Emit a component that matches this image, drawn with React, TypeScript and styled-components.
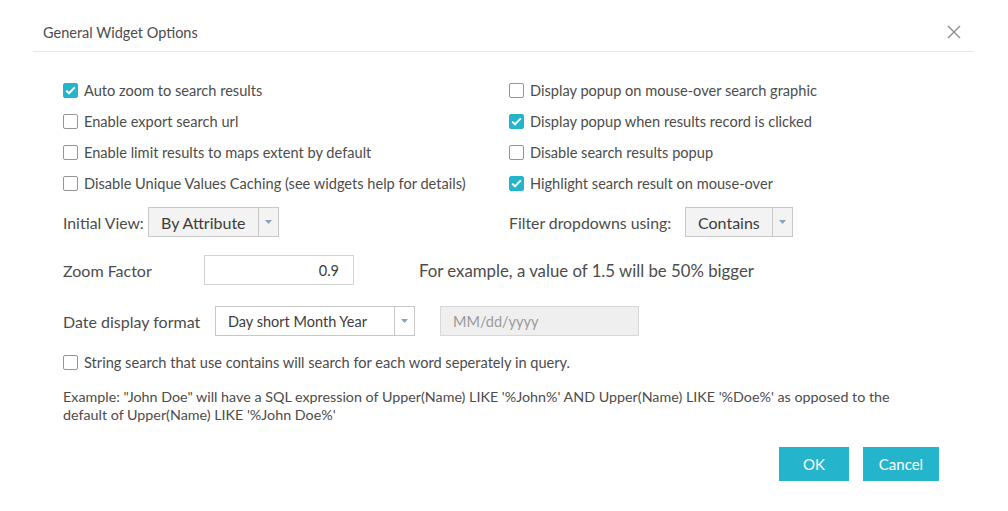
import React from "react";
import styled, { createGlobalStyle } from "styled-components";

const Global = createGlobalStyle`
  html, body { margin: 0; padding: 0; background: #fff; }
  body { font-family: Lato, "Open Sans", sans-serif; color: #4c4c4c; }
  * { box-sizing: border-box; }
`;

const Dialog = styled.div`
  margin: 13px 22px 0 20px;
  height: 498px;
  border-radius: 6px;
  box-shadow: 0 0 2px rgba(0,0,0,0.04);
  display: flex;
  flex-direction: column;
`;

const Header = styled.div`
  margin: 0 13px;
  height: 39px;
  border-bottom: 1px solid #e1e8f0;
  display: flex;
  align-items: center;
  justify-content: space-between;
  padding: 0 12px 0 10px;
`;

const Title = styled.div`
  font-size: 14.5px;
  color: #4c4c4c;
`;

const Close = styled.button`
  border: 0;
  background: none;
  padding: 0;
  width: 14px;
  height: 14px;
  display: flex;
  cursor: pointer;
`;

const Body = styled.div`
  padding: 23px 43px 0 43px;
  display: flex;
  flex-direction: column;
`;

const Grid = styled.div`
  display: grid;
  grid-template-columns: 446px 1fr;
`;

const CheckRow = styled.label`
  display: flex;
  align-items: center;
  height: 31px;
  font-size: 14.6px;
  gap: 6px;
  white-space: nowrap;
`;

const Box = styled.span<{ $on?: boolean }>`
  width: 15px;
  height: 15px;
  border-radius: 2px;
  flex: none;
  display: inline-flex;
  align-items: center;
  justify-content: center;
  background: ${(p) => (p.$on ? "#24b5cc" : "#fff")};
  border: 1px solid ${(p) => (p.$on ? "#24b5cc" : "#959595")};
`;

const Inline = styled.div`
  display: flex;
  align-items: center;
  font-size: 15.8px;
  height: 46px;
`;

const Select = styled.div<{ $w: number }>`
  width: ${(p) => p.$w}px;
  height: 30px;
  border: 1px solid #c8c8c8;
  background: #f3f3f3;
  display: flex;
  font-size: 16px;
  color: #3c3c3c;
`;

const SelectText = styled.div`
  flex: 1;
  display: flex;
  align-items: center;
  padding-left: 12px;
`;

const Arrow = styled.div<{ $white?: boolean }>`
  width: 20px;
  border-left: 1px solid #c8c8c8;
  display: flex;
  align-items: center;
  justify-content: center;
  background: ${(p) => (p.$white ? "#fff" : "#f3f3f3")};
`;

const WhiteSelect = styled(Select)`
  background: #fff;
  font-size: 14.5px;
`;

const FieldRow = styled.div<{ $h: number }>`
  display: flex;
  align-items: center;
  height: ${(p) => p.$h}px;
  font-size: 16px;
`;

const Label = styled.div<{ $w: number }>`
  width: ${(p) => p.$w}px;
  flex: none;
  white-space: nowrap;
`;

const NumInput = styled.div`
  width: 150px;
  height: 30px;
  border: 1px solid #d3d3d3;
  display: flex;
  align-items: center;
  justify-content: flex-end;
  padding-right: 14px;
  font-size: 14.5px;
  color: #3c3c3c;
`;

const Hint = styled.div`
  margin-left: 65px;
  font-size: 16.8px;
`;

const Disabled = styled.div`
  margin-left: 25px;
  width: 199px;
  height: 30px;
  border: 1px solid #d8d8d8;
  background: #efefef;
  color: #9a9a9a;
  display: flex;
  align-items: center;
  padding-left: 12px;
  font-size: 14.5px;
`;

const Example = styled.div`
  margin-top: 10px;
  font-size: 14.3px;
  line-height: 18px;
  width: 870px;
`;

const Footer = styled.div`
  display: flex;
  justify-content: flex-end;
  gap: 14px;
  padding: 0 47px 0 0;
  margin-top: 23px;
`;

const Btn = styled.button<{ $w: number }>`
  width: ${(p) => p.$w}px;
  height: 34px;
  border: 0;
  background: #24b5cc;
  color: #fff;
  font-family: inherit;
  font-size: 15px;
  cursor: pointer;
`;

const Check = () => (
  <svg width="11" height="9" viewBox="0 0 11 9">
    <path d="M1.2 4.6 L4 7.3 L9.8 1.4" stroke="#fff" strokeWidth="2" fill="none" />
  </svg>
);

const Opt = ({ on, children }: { on?: boolean; children: React.ReactNode }) => (
  <CheckRow>
    <Box $on={on}>{on && <Check />}</Box>
    {children}
  </CheckRow>
);

const Caret = () => (
  <svg width="7" height="4" viewBox="0 0 7 4">
    <path d="M0 0 L7 0 L3.5 4 Z" fill="#8aa0c0" />
  </svg>
);

export default function App() {
  return (
    <>
      <Global />
      <Dialog>
        <Header>
          <Title>General Widget Options</Title>
          <Close aria-label="close">
            <svg width="14" height="14" viewBox="0 0 14 14">
              <path d="M1 1 L13 13 M13 1 L1 13" stroke="#8c8c8c" strokeWidth="1.4" />
            </svg>
          </Close>
        </Header>
        <Body>
          <Grid>
            <Opt on>Auto zoom to search results</Opt>
            <Opt>Display popup on mouse-over search graphic</Opt>
            <Opt>Enable export search url</Opt>
            <Opt on>Display popup when results record is clicked</Opt>
            <Opt>Enable limit results to maps extent by default</Opt>
            <Opt>Disable search results popup</Opt>
            <Opt>Disable Unique Values Caching (see widgets help for details)</Opt>
            <Opt on>Highlight search result on mouse-over</Opt>
            <Inline>
              <Label $w={85}>Initial View:</Label>
              <Select $w={131}>
                <SelectText>By Attribute</SelectText>
                <Arrow><Caret /></Arrow>
              </Select>
            </Inline>
            <Inline>
              <Label $w={176}>Filter dropdowns using:</Label>
              <Select $w={108}>
                <SelectText>Contains</SelectText>
                <Arrow><Caret /></Arrow>
              </Select>
            </Inline>
          </Grid>
          <FieldRow $h={50}>
            <Label $w={141}>Zoom Factor</Label>
            <NumInput>0.9</NumInput>
            <Hint>For example, a value of 1.5 will be 50% bigger</Hint>
          </FieldRow>
          <FieldRow $h={52}>
            <Label $w={152}>Date display format</Label>
            <WhiteSelect $w={200}>
              <SelectText>Day short Month Year</SelectText>
              <Arrow $white><Caret /></Arrow>
            </WhiteSelect>
            <Disabled>MM/dd/yyyy</Disabled>
          </FieldRow>
          <Opt>String search that use contains will search for each word seperately in query.</Opt>
          <Example>
            Example: "John Doe" will have a SQL expression of Upper(Name) LIKE '%John%' AND Upper(Name) LIKE '%Doe%' as opposed to the default of Upper(Name) LIKE '%John Doe%'
          </Example>
        </Body>
        <Footer>
          <Btn $w={70}>OK</Btn>
          <Btn $w={76}>Cancel</Btn>
        </Footer>
      </Dialog>
    </>
  );
}
